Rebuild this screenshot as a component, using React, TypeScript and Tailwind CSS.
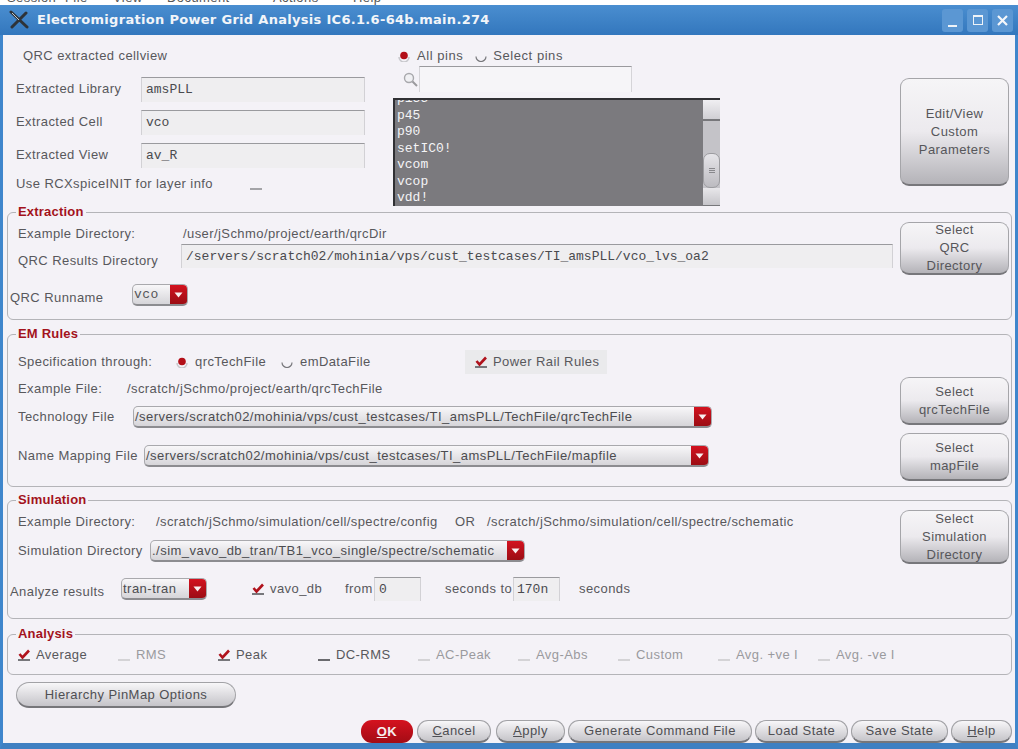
import React from "react";

const labelColor = "text-[#58585c]";

function Check({ on = false, tone = "#6a6a6e" }: { on?: boolean; tone?: string }) {
  return (
    <svg width="14" height="12" viewBox="0 0 14 12" className="shrink-0">
      <rect x="1" y="10" width="12" height="2" fill={on ? "#77777b" : tone} />
      {on && <path d="M2.5 5 L5.5 8.5 L12 1.5" fill="none" stroke="#b0121c" strokeWidth="2.6" />}
    </svg>
  );
}

function Radio({ on = false }: { on?: boolean }) {
  return (
    <svg width="12" height="12" viewBox="0 0 12 12" className="shrink-0">
      {on ? (
        <>
          <path d="M1 7 A5 5 0 0 0 11 7" fill="none" stroke="#c8c8cc" strokeWidth="1.5" />
          <circle cx="6" cy="5.5" r="3.8" fill="#b30f18" />
        </>
      ) : (
        <path d="M1 6.5 A5 5 0 0 0 11 6.5" fill="none" stroke="#77777b" strokeWidth="1.2" />
      )}
    </svg>
  );
}

function TextField({ value, className = "" }: { value: string; className?: string }) {
  return (
    <div
      className={`flex items-center border-t border-l border-r border-t-[#9a9a9e] border-x-[#d2d1d5] bg-[#efeef0] font-['Liberation_Mono',monospace] text-[13px] tracking-normal text-[#4a4a4e] ${className}`}
    >
      {value}
    </div>
  );
}

function Dropdown({ value, className = "", mono = false }: { value: string; className?: string; mono?: boolean }) {
  return (
    <div
      className={`flex items-stretch overflow-hidden rounded-[5px] border border-[#a9a9ad] border-b-2 border-b-[#8c8c90] bg-linear-to-b from-[#f8f7f9] to-[#d6d5d9] ${className}`}
    >
      <div className={`flex flex-1 items-center overflow-hidden whitespace-nowrap pl-[1px] text-[13px] ${mono ? "font-['Liberation_Mono',monospace] text-[#555559]" : "tracking-[0.48px] text-[#4c4c50]"}`}>
        {value}
      </div>
      <div className="flex w-[17px] shrink-0 items-center justify-center bg-linear-to-b from-[#d3121f] to-[#9c0d14]">
        <svg width="9" height="6" viewBox="0 0 9 6">
          <path d="M0.5 0.5 H8.5 L4.5 5.5 Z" fill="#f8f0f0" />
        </svg>
      </div>
    </div>
  );
}

function SideButton({ lines, className = "" }: { lines: string[]; className?: string }) {
  return (
    <div
      className={`flex w-[109px] flex-col items-center justify-center rounded-[9px] border border-[#a5a5a9] border-b-2 border-b-[#77777b] bg-linear-to-b from-[#f6f5f7] via-[#eceaee] to-[#b4b3b8] text-[13px] leading-[18px] tracking-[0.42px] text-[#56565a] ${className}`}
    >
      {lines.map((l) => (
        <span key={l}>{l}</span>
      ))}
    </div>
  );
}

function PillButton({ children, className = "" }: { children: React.ReactNode; className?: string }) {
  return (
    <div
      className={`flex h-[23px] items-center justify-center rounded-[11px] border border-[#a2a2a6] border-b-2 border-b-[#76767a] bg-linear-to-b from-[#f8f7f9] to-[#c5c4c9] text-[13px] tracking-[0.45px] text-[#4f4f53] ${className}`}
    >
      {children}
    </div>
  );
}

function Group({ title, className = "", children }: { title: string; className?: string; children: React.ReactNode }) {
  return (
    <fieldset className={`rounded-[6px] border border-[#b4b4b8] ${className}`}>
      <legend className="ml-[8px] px-[2px] text-[13px] font-bold leading-[14px] tracking-[0.2px] text-[#a3121c]">{title}</legend>
      {children}
    </fieldset>
  );
}

const pins = ["p135", "p45", "p90", "setIC0!", "vcom", "vcop", "vdd!"];

const metrics: { name: string; on?: boolean; dim?: boolean }[] = [
  { name: "Average", on: true },
  { name: "RMS", dim: true },
  { name: "Peak", on: true },
  { name: "DC-RMS" },
  { name: "AC-Peak", dim: true },
  { name: "Avg-Abs", dim: true },
  { name: "Custom", dim: true },
  { name: "Avg. +ve I", dim: true },
  { name: "Avg. -ve I", dim: true },
];

export default function App() {
  return (
    <div className={`flex h-[749px] w-[1018px] flex-col overflow-hidden bg-white font-['Liberation_Sans',sans-serif] text-[13px] tracking-[0.42px] ${labelColor}`}>
      {/* clipped menu of the window behind */}
      <div className="h-[5px] shrink-0 overflow-hidden bg-white">
        <div className="-mt-[10px] flex pl-[7px] text-[13px] leading-[15px] text-[#555]">
          <span className="w-[58px]">Session</span>
          <span className="w-[48px]">File</span>
          <span className="w-[54px]">View</span>
          <span className="w-[106px]">Document</span>
          <span className="w-[80px]">Actions</span>
          <span>Help</span>
        </div>
      </div>

      {/* title bar */}
      <div className="flex h-[30px] shrink-0 items-center bg-linear-to-b from-[#4a8ed0] to-[#3377bd] pl-[9px] pr-[5px]">
        <svg width="20" height="20" viewBox="0 0 20 20" className="shrink-0">
          <path d="M2 2 L18 17 M3 17 L17 3" stroke="#2e3338" strokeWidth="3" strokeLinecap="round" />
          <path d="M3 3 L10 10" stroke="#c5cbd0" strokeWidth="1" />
        </svg>
        <div className="ml-[8px] flex-1 font-['DejaVu_Sans',sans-serif] text-[13px] font-bold tracking-[0.3px] text-[#f2f5f9]">
          Electromigration Power Grid Analysis IC6.1.6-64b.main.274
        </div>
        <div className="flex gap-[4px]">
          <div className="flex h-[23px] w-[21px] items-end justify-center rounded-[3px] bg-[#5b97d3] pb-[5px]">
            <div className="h-[2px] w-[9px] bg-[#eef3f8]" />
          </div>
          <div className="flex h-[23px] w-[21px] items-center justify-center rounded-[3px] bg-[#5b97d3]">
            <div className="h-[10px] w-[10px] border border-t-2 border-[#eef3f8]" />
          </div>
          <div className="flex h-[23px] w-[21px] items-center justify-center rounded-[3px] bg-[#5b97d3]">
            <svg width="11" height="11" viewBox="0 0 11 11">
              <path d="M1 1 L10 10 M10 1 L1 10" stroke="#f4f7fa" strokeWidth="2.2" />
            </svg>
          </div>
        </div>
      </div>

      {/* body */}
      <div className="flex flex-1 flex-col border-x-[3px] border-b-[6px] border-x-[#3f86cc] border-b-[#3f80c2] bg-[#f4f2f7] pl-[4px] pr-[3px]">
        {/* top */}
        <div className="flex h-[170px] shrink-0">
          <div className="w-[358px] shrink-0 pl-[9px]">
            <div className="pl-[7px] pt-[13px] leading-[15px]">QRC extracted cellview</div>
            {[
              ["Extracted Library", "amsPLL"],
              ["Extracted Cell", "vco"],
              ["Extracted View", "av_R"],
            ].map(([label, value], i) => (
              <div key={label} className={`flex h-[25px] items-center ${i === 0 ? "mt-[14px]" : "mt-[8px]"}`}>
                <span className="w-[125px] shrink-0 -translate-y-[1px]">{label}</span>
                <TextField value={value} className="h-[25px] w-[224px] pl-[4px]" />
              </div>
            ))}
            <div className="mt-[8px] flex items-center leading-[15px]">
              <span className="w-[233px]">Use RCXspiceINIT for layer info</span>
              <Check tone="#a4a4a8" />
            </div>
          </div>

          <div className="ml-[28px] w-[327px] shrink-0">
            <div className="flex h-[31px] items-center pl-[5px] pt-[11px] text-[13px] tracking-[0.55px]">
              <Radio on />
              <span className="ml-[7px]">All pins</span>
              <span className="ml-[12px]">
                <Radio />
              </span>
              <span className="ml-[6px]">Select pins</span>
            </div>
            <div className="flex items-center pl-[9px]">
              <svg width="17" height="17" viewBox="0 0 17 17" className="mr-[0px]">
                <circle cx="7" cy="7" r="4.5" fill="#f0f0f3" stroke="#a8a8ac" strokeWidth="1.4" />
                <path d="M10.5 10.5 L15 15" stroke="#9a9a9e" strokeWidth="2" />
              </svg>
              <div className="h-[26px] w-[213px] border-l border-r border-t border-l-[#d5d4d8] border-r-[#d5d4d8] border-t-[#9a9a9e] bg-[#f6f5f8]" />
            </div>
            <div className="mt-[6px] flex h-[108px] border-l-2 border-t-2 border-[#303034] bg-[#7b7a7e]">
              <div className="flex-1 overflow-hidden pl-[2px] font-['Liberation_Mono',monospace] text-[13px] leading-[16.5px] tracking-normal text-[#f4f4f6]">
                <div className="-mt-[9px]">
                  {pins.map((p) => (
                    <div key={p}>{p}</div>
                  ))}
                </div>
              </div>
              <div className="flex w-[17px] shrink-0 flex-col bg-[#c4c3c8]">
                <div className="h-[21px] shrink-0 border-b-2 border-[#77777b] bg-linear-to-b from-[#f0eff2] to-[#d0cfd4]" />
                <div className="flex-1" />
                <div className="flex h-[35px] shrink-0 items-center justify-center rounded-[7px] border border-[#9c9ca0] bg-linear-to-b from-[#e6e5e9] to-[#bcbbc0]">
                  <div className="flex flex-col gap-[1px]">
                    <div className="h-px w-[6px] bg-[#88888c]" />
                    <div className="h-px w-[6px] bg-[#88888c]" />
                    <div className="h-px w-[6px] bg-[#88888c]" />
                  </div>
                </div>
                <div className="h-[18px] shrink-0 border-b border-[#77777b] bg-linear-to-b from-[#e8e7ea] to-[#c6c5ca]" />
              </div>
            </div>
          </div>

          <div className="ml-auto pr-[3px] pt-[43px]">
            <SideButton lines={["Edit/View", "Custom", "Parameters"]} className="h-[108px]" />
          </div>
        </div>

        {/* Extraction */}
        <Group title="Extraction" className="h-[115px] shrink-0 pr-[2px]">
          <div className="flex">
            <div className="flex-1 pl-[10px]">
              <div className="flex pt-[7px] leading-[15px]">
                <span className="w-[165px] shrink-0">Example Directory:</span>
                <span>/user/jSchmo/project/earth/qrcDir</span>
              </div>
              <div className="mt-[3px] flex items-center">
                <span className="w-[163px] shrink-0 translate-y-[5px]">QRC Results Directory</span>
                <TextField value="/servers/scratch02/mohinia/vps/cust_testcases/TI_amsPLL/vco_lvs_oa2" className="h-[24px] flex-1 pl-[4px]" />
              </div>
            </div>
            <div className="ml-[7px] pt-[3px]">
              <SideButton lines={["Select", "QRC", "Directory"]} className="h-[53px]" />
            </div>
          </div>
          <div className="mt-[9px] flex items-center pl-[2px]">
            <span className="w-[122px] translate-y-[3px]">QRC Runname</span>
            <Dropdown value="vco" mono className="h-[22px] w-[56px]" />
          </div>
        </Group>

        {/* EM Rules */}
        <Group title="EM Rules" className="mt-[7px] h-[160px] shrink-0 pr-[2px]">
          <div className="flex">
            <div className="flex-1 pl-[10px]">
              <div className="mt-[9px] flex h-[24px] items-center">
                <span className="w-[158px]">Specification through:</span>
                <Radio on />
                <span className="ml-[7px] w-[86px]">qrcTechFile</span>
                <Radio />
                <span className="ml-[7px] w-[170px]">emDataFile</span>
                <div className="-ml-[5px] flex h-[24px] w-[142px] items-center bg-[#eaeaec] pl-[9px]">
                  <Check on />
                  <span className="ml-[5px]">Power Rail Rules</span>
                </div>
              </div>
              <div className="mt-[7px] flex h-[16px] items-center">
                <span className="w-[109px]">Example File:</span>
                <span>/scratch/jSchmo/project/earth/qrcTechFile</span>
              </div>
              <div className="mt-[9px] flex items-center">
                <span className="w-[115px]">Technology File</span>
                <Dropdown value="/servers/scratch02/mohinia/vps/cust_testcases/TI_amsPLL/TechFile/qrcTechFile" className="h-[22px] w-[579px]" />
              </div>
              <div className="mt-[17px] flex items-center">
                <span className="w-[126px]">Name Mapping File</span>
                <Dropdown value="/servers/scratch02/mohinia/vps/cust_testcases/TI_amsPLL/TechFile/mapfile" className="h-[22px] w-[565px]" />
              </div>
            </div>
            <div className="flex flex-col gap-[8px] pt-[36px]">
              <SideButton lines={["Select", "qrcTechFile"]} className="h-[48px]" />
              <SideButton lines={["Select", "mapFile"]} className="h-[48px]" />
            </div>
          </div>
        </Group>

        {/* Simulation */}
        <Group title="Simulation" className="mt-[6px] h-[126px] shrink-0 pr-[2px]">
          <div className="flex">
            <div className="flex-1 pl-[10px]">
              <div className="flex pt-[7px] leading-[15px]">
                <span className="w-[138px] shrink-0">Example Directory:</span>
                <span className="w-[299px] shrink-0">/scratch/jSchmo/simulation/cell/spectre/config</span>
                <span className="w-[32px] shrink-0">OR</span>
                <span className="whitespace-nowrap">/scratch/jSchmo/simulation/cell/spectre/schematic</span>
              </div>
              <div className="mt-[11px] flex items-center">
                <span className="w-[132px] shrink-0">Simulation Directory</span>
                <Dropdown value="./sim_vavo_db_tran/TB1_vco_single/spectre/schematic" className="h-[22px] w-[375px]" />
              </div>
            </div>
            <div className="pt-[3px]">
              <SideButton lines={["Select", "Simulation", "Directory"]} className="h-[54px]" />
            </div>
          </div>
          <div className="mt-[13px] flex items-center pl-[2px]">
            <span className="w-[111px] translate-y-[3px]">Analyze results</span>
            <Dropdown value="tran-tran" className="h-[22px] w-[86px]" />
            <span className="ml-[44px]">
              <Check on />
            </span>
            <span className="ml-[5px] w-[75px]">vavo_db</span>
            <span className="w-[29px]">from</span>
            <TextField value="0" className="h-[24px] w-[47px] pl-[4px]" />
            <span className="ml-[24px] w-[68px]">seconds to</span>
            <TextField value="170n" className="h-[24px] w-[47px] pl-[3px]" />
            <span className="ml-[19px]">seconds</span>
          </div>
        </Group>

        {/* Analysis */}
        <Group title="Analysis" className="mt-[8px] h-[48px] shrink-0">
          <div className="flex pl-[9px] pt-[4px]">
            {metrics.map((m) => (
              <div key={m.name} className={`flex w-[100px] items-center ${m.dim ? "text-[#9a9a9e]" : ""}`}>
                <Check on={m.on} tone={m.dim ? "#d4d3d6" : "#6a6a6e"} />
                <span className="ml-[5px] whitespace-nowrap">{m.name}</span>
              </div>
            ))}
          </div>
        </Group>

        <PillButton className="ml-[9px] mt-[7px] !h-[26px] w-[220px] !rounded-[13px]">Hierarchy PinMap Options</PillButton>

        {/* footer buttons */}
        <div className="mt-[12px] flex justify-end gap-[3px]">
          <div className="mr-[1px] flex h-[23px] w-[52px] items-center justify-center rounded-[11px] bg-linear-to-b from-[#d5121f] to-[#a30c15] text-[13px] font-bold tracking-[0.6px] text-[#f6eeee]">
            <span><u>O</u>K</span>
          </div>
          <PillButton className="mr-[2px] w-[74px]"><span><u>C</u>ancel</span></PillButton>
          <PillButton className="w-[69px]"><span><u>A</u>pply</span></PillButton>
          <PillButton className="w-[184px]">Generate Command File</PillButton>
          <PillButton className="w-[93px]">Load State</PillButton>
          <PillButton className="w-[97px]">Save State</PillButton>
          <PillButton className="w-[61px]"><span><u>H</u>elp</span></PillButton>
        </div>
      </div>
    </div>
  );
}
